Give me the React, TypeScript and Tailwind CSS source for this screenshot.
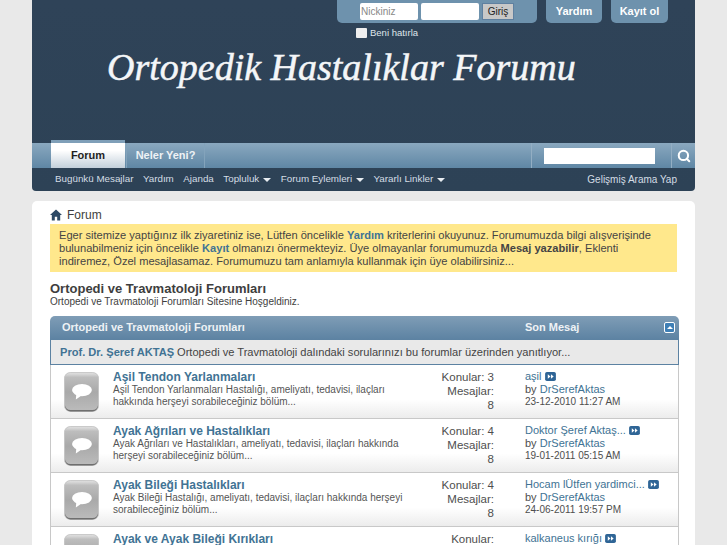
import { Search } from "lucide-react";

type Forum = {
	title: string;
	desc: string;
	konular: string;
	mesajlar: string;
	lastPost: string;
	by?: string;
	date?: string;
};

const forums: Forum[] = [
	{
		title: "Aşil Tendon Yarlanmaları",
		desc: "Aşil Tendon Yarlanmaları Hastalığı, ameliyatı, tedavisi, ilaçları hakkında herşeyi sorabileceğiniz bölüm...",
		konular: "Konular: 3",
		mesajlar: "8",
		lastPost: "aşil",
		by: "DrSerefAktas",
		date: "23-12-2010 11:27 AM",
	},
	{
		title: "Ayak Ağrıları ve Hastalıkları",
		desc: "Ayak Ağrıları ve Hastalıkları, ameliyatı, tedavisi, ilaçları hakkında herşeyi sorabileceğiniz bölüm...",
		konular: "Konular: 4",
		mesajlar: "8",
		lastPost: "Doktor Şeref Aktaş...",
		by: "DrSerefAktas",
		date: "19-01-2011 05:15 AM",
	},
	{
		title: "Ayak Bileği Hastalıkları",
		desc: "Ayak Bileği Hastalığı, ameliyatı, tedavisi, ilaçları hakkında herşeyi sorabileceğiniz bölüm...",
		konular: "Konular: 4",
		mesajlar: "8",
		lastPost: "Hocam lÜtfen yardimci...",
		by: "DrSerefAktas",
		date: "24-06-2011 19:57 PM",
	},
	{
		title: "Ayak ve Ayak Bileği Kırıkları",
		desc: "",
		konular: "Konular:",
		mesajlar: "",
		lastPost: "kalkaneus kırığı",
	},
];

function ForumIcon() {
	return (
		<svg width="35" height="40" viewBox="0 0 37 42" className="shrink-0">
			<defs>
				<linearGradient id="tile" x1="0" y1="0" x2="0" y2="1">
					<stop offset="0" stopColor="#e4e4e4" />
					<stop offset="0.12" stopColor="#bdbdbd" />
					<stop offset="0.5" stopColor="#a9a9a9" />
					<stop offset="1" stopColor="#bcbcbc" />
				</linearGradient>
			</defs>
			<rect x="0.5" y="0.5" width="36" height="41" rx="6" fill="url(#tile)" stroke="#c4c4c4" />
			<path d="M1 35 v1 a6 6 0 0 0 6 5.5 h23 a6 6 0 0 0 6 -5.5 v-1 a6 6 0 0 1 -6 5 h-23 a6 6 0 0 1 -6 -5" fill="#6f6f6f" />
			<ellipse cx="19" cy="19" rx="10.5" ry="6.5" fill="#fff" />
			<path d="M13 23 L12.5 29 L19 24.5 Z" fill="#fff" />
		</svg>
	);
}

function GoIcon() {
	return (
		<svg width="11" height="9" viewBox="0 0 12 10" className="inline-block shrink-0">
			<rect width="12" height="10" rx="2" fill="#2f6596" />
			<path d="M3 2.5 L6 5 L3 7.5 Z M6.5 2.5 L9.5 5 L6.5 7.5 Z" fill="#fff" />
		</svg>
	);
}

function Caret() {
	return <span className="ml-[4px] inline-block h-0 w-0 border-x-[4px] border-t-[4px] border-x-transparent border-t-[#e8edf2] align-middle" />;
}

function ForumRow({ forum }: { forum: Forum }) {
	return (
		<div className="flex h-[54px] items-start border-b border-[#c8c8c8] bg-gradient-to-b from-white from-65% to-[#ececec] pl-[13px]">
			<div className="pt-[7px]">
				<ForumIcon />
			</div>
			<div className="ml-[14px] w-[290px] pt-[5px]">
				<h3 className="text-[12px] font-bold leading-[14px] text-[#417394]">{forum.title}</h3>
				<p className="text-[10px] leading-[12px] text-[#555]">{forum.desc}</p>
			</div>
			<div className="w-[91px] pt-[5px] text-right text-[11.5px] leading-[14px] text-[#4e4e4e]">
				<div>{forum.konular}</div>
				<div>Mesajlar:</div>
				<div>{forum.mesajlar}</div>
			</div>
			<div className="ml-[31px] pt-[5px] text-[11px] leading-[13px] text-[#4e4e4e]">
				<div className="flex items-center gap-[3px] text-[#417394]">
					<span>{forum.lastPost}</span>
					<GoIcon />
				</div>
				{forum.by && (
					<div>
						by <span className="text-[#417394]">{forum.by}</span>
					</div>
				)}
				<div className="text-[10px] leading-[12px]">{forum.date}</div>
			</div>
		</div>
	);
}

export default function App() {
	return (
		<div
			className="h-[545px] overflow-hidden bg-[#e9e9e9]"
			style={{ fontFamily: '"Liberation Sans", Arial, sans-serif' }}
		>
			<div className="ml-[32px] w-[663px]">
				<header className="h-[191px] rounded-b-[4px] bg-gradient-to-b from-[#2f4358] to-[#2d4256]">
					<div className="flex h-[23px] justify-end pr-[27px]">
						<div className="mr-[9px] flex h-[23px] w-[200px] gap-[3px] rounded-b-[5px] bg-[#6e92ad] pl-[23px] pt-[3px]">
							<input
								placeholder="Nickiniz"
								className="h-[17px] w-[58px] rounded-[2px] bg-white px-[1px] text-[10px] text-[#555] placeholder:text-[#888]"
							/>
							<input className="h-[17px] w-[58px] rounded-[2px] bg-white" />
							<button className="h-[17px] w-[32px] border border-[#5f80a0] bg-[#c8c8c8] text-[10px] text-[#222]">
								Giriş
							</button>
						</div>
						<a className="mr-[9px] flex h-[23px] w-[56px] items-center justify-center rounded-b-[5px] bg-[#6e92ad] text-[11px] font-bold text-white">
							Yardım
						</a>
						<a className="flex h-[23px] w-[57px] items-center justify-center rounded-b-[5px] bg-[#6e92ad] text-[11px] font-bold text-white">
							Kayıt ol
						</a>
					</div>
					<div className="flex h-[16px] items-center pl-[324px] pt-[4px]">
						<span className="h-[10px] w-[11px] rounded-[1px] bg-[#eee]" />
						<span className="ml-[3px] text-[9.5px] leading-none text-[#dfe6ec]">Beni hatırla</span>
					</div>
					<div
						className="h-[104px] pl-[75px] pt-[3px] text-[38px] italic leading-[50px] text-[#f4f6f8] [-webkit-text-stroke:0.5px_#f4f6f8]"
						style={{ fontFamily: '"Liberation Serif", serif' }}
					>
						Ortopedik Hastalıklar Forumu
					</div>
					<nav className="relative flex h-[25px] items-stretch bg-gradient-to-b from-[#8aa8bf] to-[#5f87a5]">
						<div className="absolute bottom-0 left-[19px] flex h-[28px] w-[74px] items-center justify-center border-t-[3px] border-[#7f9fb8] bg-gradient-to-b from-white from-30% to-[#c3d0db] text-[11px] font-bold text-[#1f1f1f]">
							Forum
						</div>
						<div className="ml-[94px] flex w-[79px] items-center justify-center border-x border-[#83a3bb] text-[11px] font-bold text-[#eef2f5]">
							Neler Yeni?
						</div>
						<div className="ml-auto flex w-[140px] items-center border-l border-[#93aec3] pl-[12px]">
							<input className="h-[16px] w-[111px] bg-white" />
						</div>
						<div className="flex w-[24px] items-center justify-center border-l border-[#93aec3]">
							<Search size={14} strokeWidth={3.5} className="text-white" />
						</div>
					</nav>
					<div className="flex h-[23px] items-center gap-[9.5px] px-[23px] text-[9.8px] text-[#d4dde5]">
						<span>Bugünkü Mesajlar</span>
						<span>Yardım</span>
						<span>Ajanda</span>
						<span>
							Topluluk
							<Caret />
						</span>
						<span>
							Forum Eylemleri
							<Caret />
						</span>
						<span>
							Yararlı Linkler
							<Caret />
						</span>
						<span className="ml-auto mr-[-5px] text-[10px]">Gelişmiş Arama Yap</span>
					</div>
				</header>

				<main className="mt-[10px] h-[400px] rounded-t-[5px] bg-white pl-[18px] pr-[16px]">
					<div className="flex h-[23px] items-center gap-[5px] pt-[5px]">
						<svg width="12" height="12" viewBox="0 0 12 12">
							<path d="M6 0.5 L12 6 H10.2 V11.5 H7.2 V7.8 H4.8 V11.5 H1.8 V6 H0 Z" fill="#2d4a66" />
						</svg>
						<span className="text-[12px] text-[#3e3e3e]">Forum</span>
					</div>
					<div className="h-[48px] w-[627px] bg-[#ffe88c] pl-[9px] pr-[20px] pt-[5px] text-[11.1px] leading-[13px] text-[#444]">
						Eger sitemize yaptığınız ilk ziyaretiniz ise, Lütfen öncelikle{" "}
						<b className="text-[#417394]">Yardım</b> kriterlerini okuyunuz. Forumumuzda bilgi alışverişinde
						bulunabilmeniz için öncelikle <b className="text-[#417394]">Kayıt</b> olmanızı önermekteyiz. Üye
						olmayanlar forumumuzda <b>Mesaj yazabilir</b>, Eklenti indiremez, Özel mesajlasamaz. Forumumuzu tam
						anlamıyla kullanmak için üye olabilirsiniz...
					</div>
					<h2 className="mt-[9px] text-[13px] font-bold leading-[15px] text-[#3e3e3e]">
						Ortopedi ve Travmatoloji Forumları
					</h2>
					<p className="text-[10px] leading-[12px] text-[#3e3e3e]">
						Ortopedi ve Travmatoloji Forumları Sitesine Hoşgeldiniz.
					</p>
					<section className="mt-[8px] w-[629px]">
						<div className="flex h-[24px] items-center rounded-t-[5px] bg-gradient-to-b from-[#7f9db6] to-[#5c82a2] pb-[1px] pl-[12px] pr-[4px] text-[11px] font-bold text-[#eef2f5]">
							<span className="w-[463px]">Ortopedi ve Travmatoloji Forumları</span>
							<span>Son Mesaj</span>
							<span className="ml-auto flex h-[11px] w-[11px] items-center justify-center rounded-[2px] border border-white bg-[#3f7fb5]">
								<span className="h-0 w-0 border-x-[3px] border-b-[3px] border-x-transparent border-b-white" />
							</span>
						</div>
						<div className="flex h-[25px] items-center border-x border-b border-[#5c82a2] bg-[#e9e9e9] pl-[9px] text-[11.1px] text-[#444]">
							<b className="mr-[3px] text-[#417394]">Prof. Dr. Şeref AKTAŞ</b>
							Ortopedi ve Travmatoloji dalındaki sorularınızı bu forumlar üzerinden yanıtlıyor...
						</div>
						<div className="border-x border-[#c8c8c8]">
							{forums.map((forum) => (
								<ForumRow key={forum.title} forum={forum} />
							))}
						</div>
					</section>
				</main>
			</div>
		</div>
	);
}
